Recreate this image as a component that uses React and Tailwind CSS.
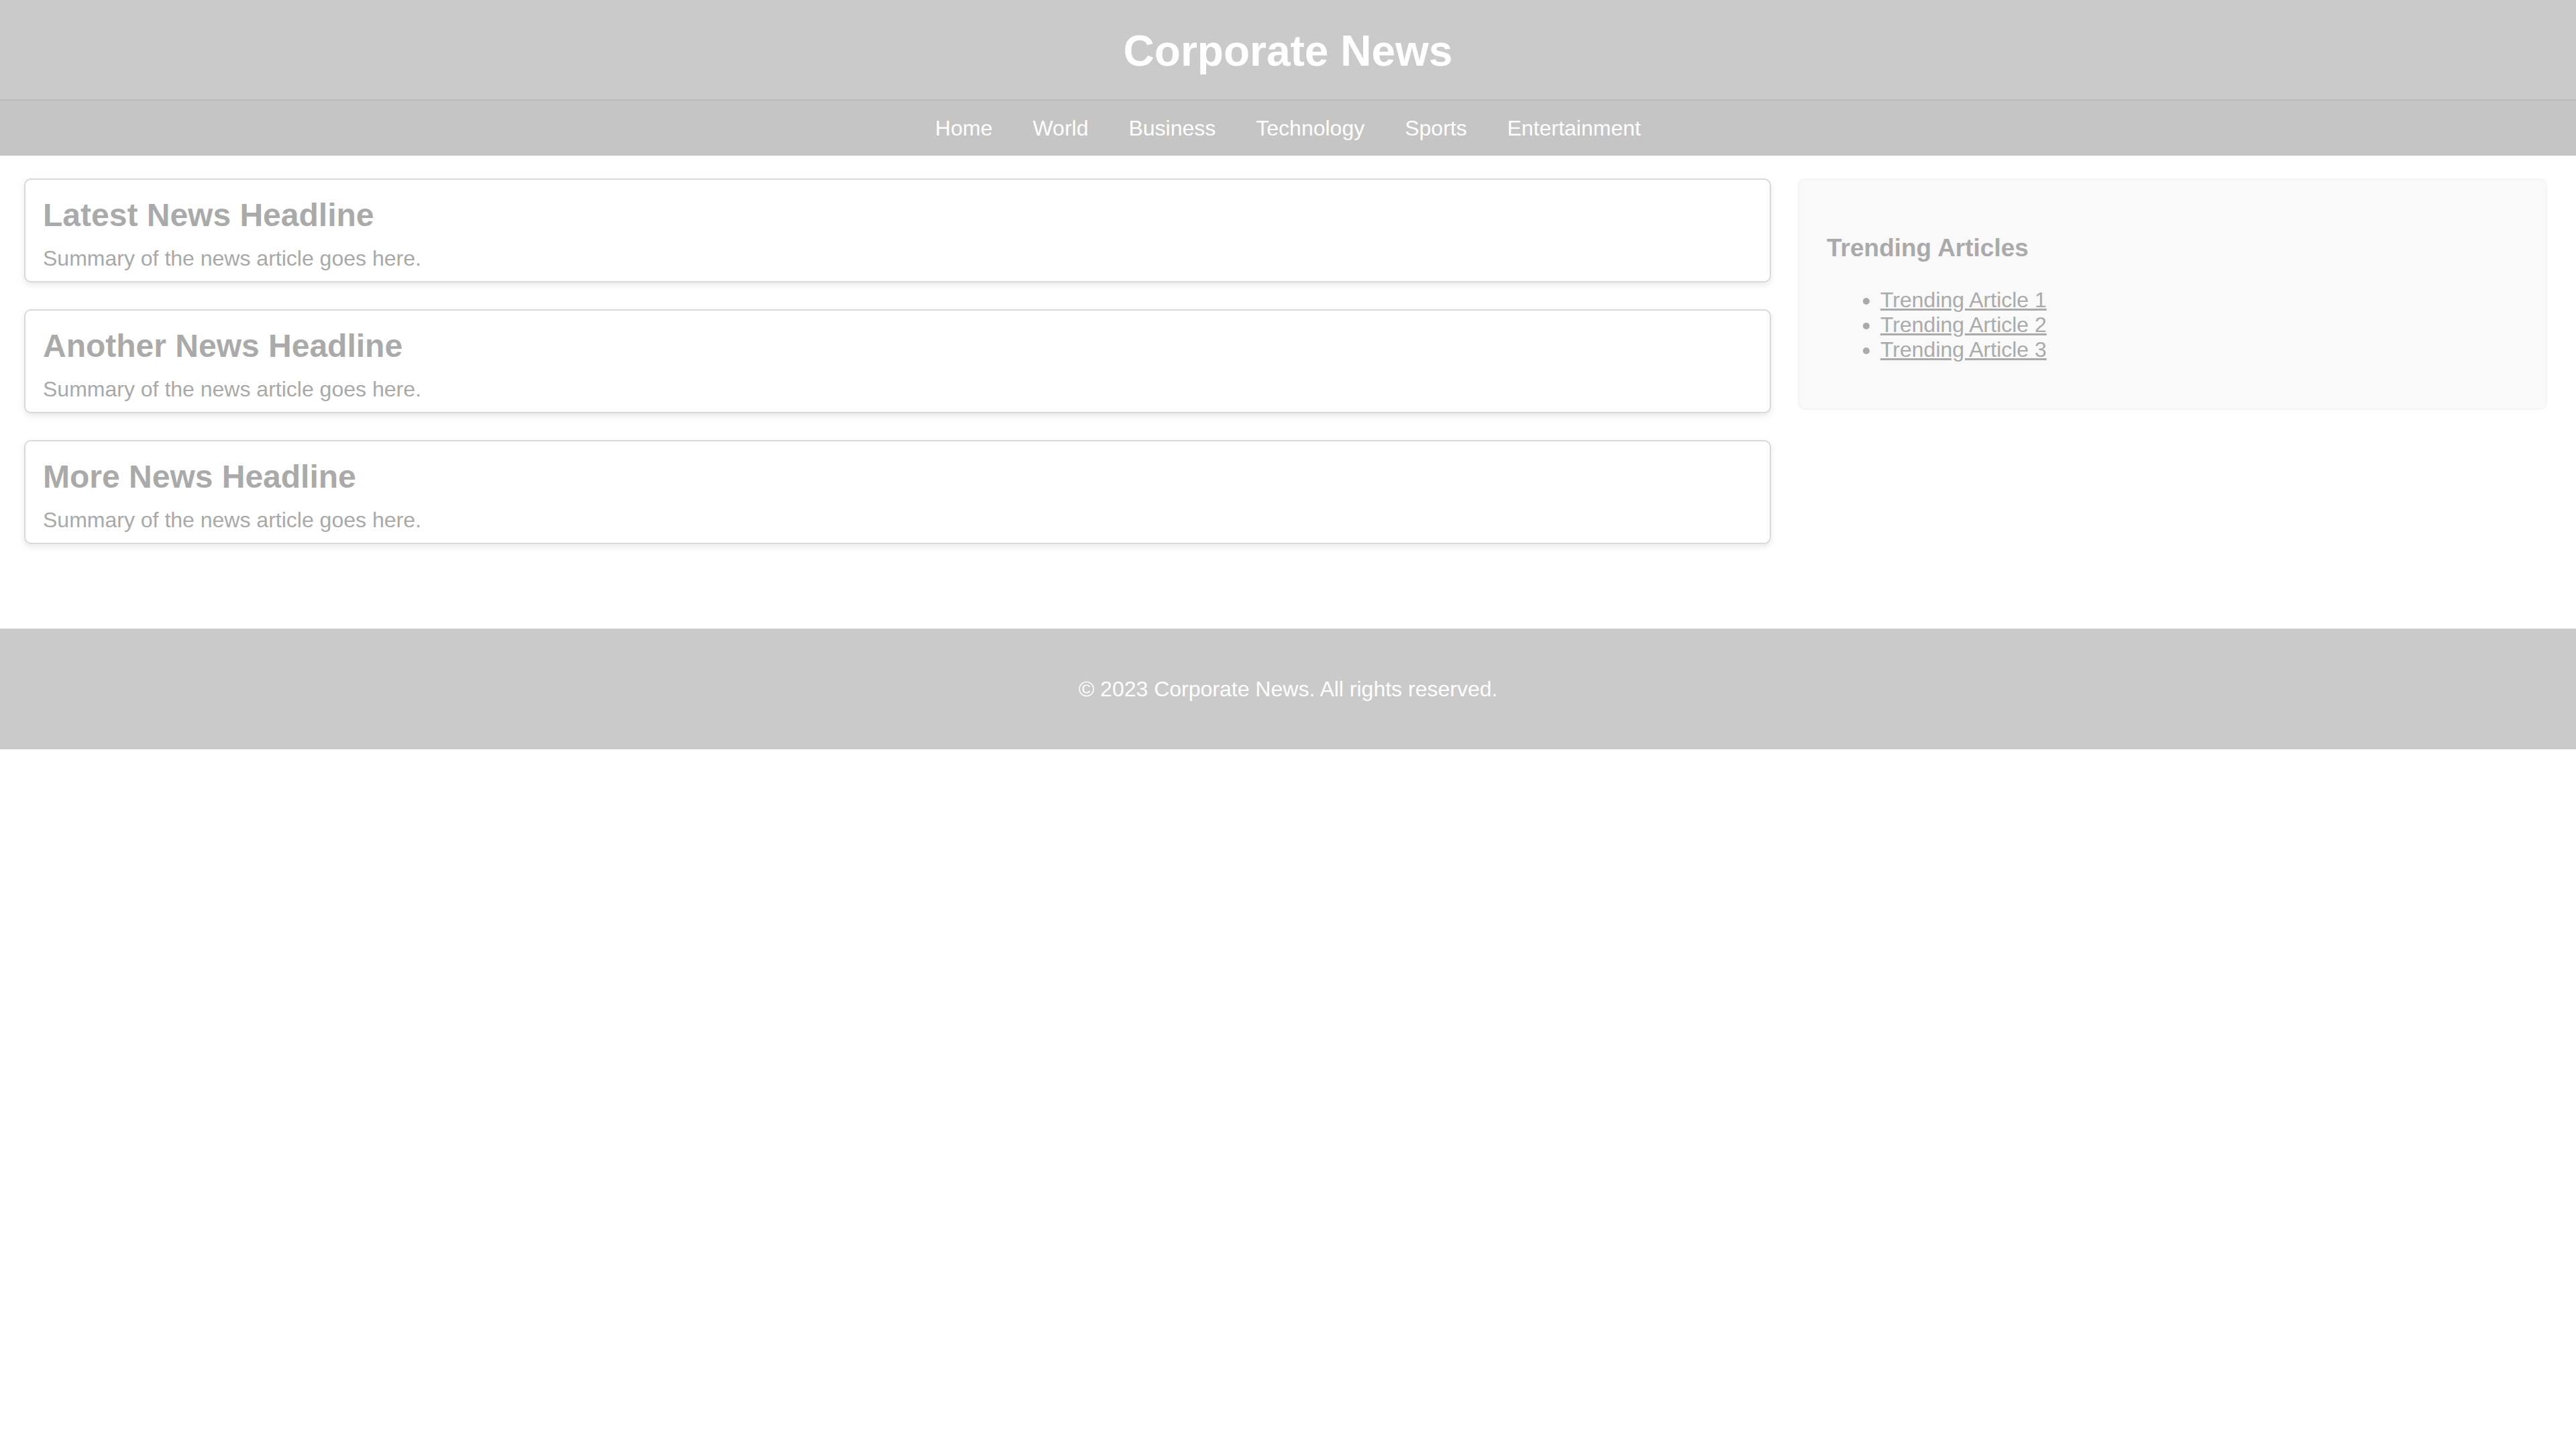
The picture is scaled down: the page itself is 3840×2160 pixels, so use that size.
import React from "react";

const navLinks = ["Home", "World", "Business", "Technology", "Sports", "Entertainment"];

const articles = [
  { title: "Latest News Headline", summary: "Summary of the news article goes here." },
  { title: "Another News Headline", summary: "Summary of the news article goes here." },
  { title: "More News Headline", summary: "Summary of the news article goes here." },
];

const trending = ["Trending Article 1", "Trending Article 2", "Trending Article 3"];

const App = () => {
  return (
    <div className="min-h-screen bg-white font-['Liberation_Sans',Arial,sans-serif] text-[32px]">
      <header className="h-[150px] bg-[#cacaca] flex items-center justify-center border-b-2 border-[#bababa] pt-[4px]">
        <h1 className="text-[64px] font-bold text-white leading-[74px]">Corporate News</h1>
      </header>

      <nav className="h-[82px] bg-[#c5c5c5] flex items-center justify-center gap-[60px]">
        {navLinks.map((link) => (
          <a key={link} href="#" className="text-white text-[32px] leading-[37px]">
            {link}
          </a>
        ))}
      </nav>

      <main className="flex gap-[40px] pl-[36px] pr-[43px] pt-[34px] pb-[126px]">
        <section className="w-[2604px] flex flex-col gap-[40px]">
          {articles.map((a) => (
            <article
              key={a.title}
              className="h-[155px] bg-white border-2 border-[#d9d9d9] rounded-[10px] shadow-[0_4px_10px_rgba(0,0,0,0.09)] pl-[26px] pt-[25px]"
            >
              <h2 className="text-[48px] font-bold text-[#aaaaaa] leading-[55px]">{a.title}</h2>
              <p className="mt-[19px] text-[32px] text-[#a9a9a9] leading-[37px]">{a.summary}</p>
            </article>
          ))}
        </section>

        <aside className="flex-1 self-start h-[345px] bg-[#f9f9f9] border-2 border-[#f5f5f5] rounded-[10px] px-[41px] pt-[80px]">
          <h3 className="text-[37px] font-bold text-[#aaaaaa] leading-[43px]">Trending Articles</h3>
          <ul className="mt-[38px] pl-[80px] list-disc marker:text-[#aaaaaa] text-[#aaaaaa]">
            {trending.map((t) => (
              <li key={t} className="leading-[37px]">
                <a href="#" className="underline text-[#aaaaaa]">
                  {t}
                </a>
              </li>
            ))}
          </ul>
        </aside>
      </main>

      <footer className="h-[180px] bg-[#cacaca] flex items-center justify-center">
        <p className="text-white text-[32px] leading-[37px]">© 2023 Corporate News. All rights reserved.</p>
      </footer>
    </div>
  );
};

export default App;
